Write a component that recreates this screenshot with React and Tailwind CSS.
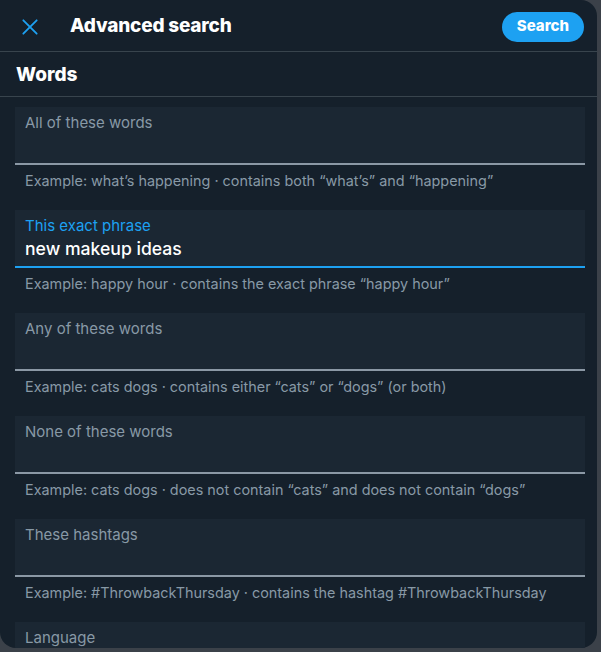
import React from "react";

const fields = [
  {
    label: "All of these words",
    hint: "Example: what’s happening · contains both “what’s” and “happening”",
  },
  {
    label: "This exact phrase",
    value: "new makeup ideas",
    active: true,
    hint: "Example: happy hour · contains the exact phrase “happy hour”",
  },
  {
    label: "Any of these words",
    hint: "Example: cats dogs · contains either “cats” or “dogs” (or both)",
  },
  {
    label: "None of these words",
    hint: "Example: cats dogs · does not contain “cats” and does not contain “dogs”",
  },
  {
    label: "These hashtags",
    hint: "Example: #ThrowbackThursday · contains the hashtag #ThrowbackThursday",
  },
  { label: "Language" },
];

function Field({ label, value, active, hint }) {
  return (
    <div>
      <div
        className={`h-[58px] bg-[#1b2733] px-[10px] pt-[6px] border-b-2 ${
          active ? "border-[#1da1f2]" : "border-[#8b98a5]"
        }`}
      >
        <div
          className={`text-[15px] leading-[20px] ${
            active ? "text-[#1da1f2]" : "text-[#8899a6]"
          }`}
        >
          {label}
        </div>
        {value && (
          <div className="text-[17.6px] leading-[24px] font-medium text-white mt-[1px]">
            {value}
          </div>
        )}
      </div>
      {hint && (
        <div className="h-[45px] px-[10px] pt-[6px] text-[14.4px] leading-[20px] text-[#8899a6]">
          {hint}
        </div>
      )}
    </div>
  );
}

export default function App() {
  return (
    <div
      className="w-[601px] h-[652px] bg-[#3b4149] overflow-hidden"
      style={{ fontFamily: 'Inter, "Liberation Sans", Arial, sans-serif' }}
    >
      <div className="w-[597px] h-[648px] bg-[#15202b] rounded-tr-2xl rounded-b-2xl overflow-hidden flex flex-col">
        <div className="h-[52px] flex items-center px-[20px] pt-[2px] border-b border-[#38444d] shrink-0">
          <svg width="20" height="20" viewBox="0 0 24 24" className="text-[#1da1f2]">
            <path
              d="M4 4 L20 20 M20 4 L4 20"
              stroke="currentColor"
              strokeWidth="2.2"
              strokeLinecap="round"
            />
          </svg>
          <div className="ml-[30px] text-[19px] font-extrabold tracking-[-0.2px] text-white">
            Advanced search
          </div>
          <button className="ml-auto mr-[-7px] h-[30px] px-[15px] rounded-full bg-[#1da1f2] text-white text-[15px] font-extrabold">
            Search
          </button>
        </div>
        <div className="h-[45px] flex items-center px-[16px] pt-[2px] border-b border-[#38444d] shrink-0">
          <div className="text-[19px] font-extrabold text-white">Words</div>
        </div>
        <div className="pl-[15px] pr-[12px] pt-[10px]">
          {fields.map((f) => (
            <Field key={f.label} {...f} />
          ))}
        </div>
      </div>
    </div>
  );
}
